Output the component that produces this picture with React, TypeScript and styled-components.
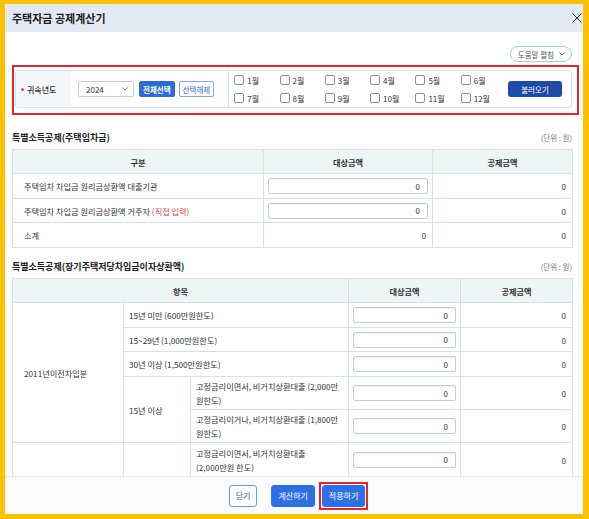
import styled, { createGlobalStyle } from "styled-components";

const GlobalStyle = createGlobalStyle`
  * { box-sizing: border-box; }
  html, body { margin: 0; padding: 0; }
  body {
    width: 589px;
    height: 519px;
    overflow: hidden;
    background: #ffc000;
    font-family: "Noto Sans CJK KR", "Noto Sans", sans-serif;
    color: #333;
  }
`;

const months = [
  ["1월", "2월", "3월", "4월", "5월", "6월"],
  ["7월", "8월", "9월", "10월", "11월", "12월"],
];

export default function App() {
  return (
    <>
      <GlobalStyle />
      <Page>
        <Modal>
          <Header>
            <Title>주택자금 공제계산기</Title>
            <CloseButton aria-label="닫기">
              <svg width="10" height="10" viewBox="0 0 10 10">
                <path d="M0.5 0.5 L9.5 9.5 M9.5 0.5 L0.5 9.5" stroke="#333" strokeWidth="1" />
              </svg>
            </CloseButton>
          </Header>

          <Body>
            <HelpRow>
              <HelpButton>
                도움말 펼침
                <svg width="6" height="4" viewBox="0 0 6 4">
                  <path d="M0.5 0.5 L3 3 L5.5 0.5" stroke="#666" strokeWidth="0.9" fill="none" />
                </svg>
              </HelpButton>
            </HelpRow>

            <RedMark>
              <FilterPanel>
                <LabelCell>귀속년도</LabelCell>
                <Controls>
                  <YearSelect>
                    2024
                    <svg width="6" height="4" viewBox="0 0 6 4">
                      <path d="M0.5 0.5 L3 3 L5.5 0.5" stroke="#777" strokeWidth="0.9" fill="none" />
                    </svg>
                  </YearSelect>
                  <SmallButton $filled>전체선택</SmallButton>
                  <SmallButton>선택해제</SmallButton>
                </Controls>
                <MonthGrid>
                  {months.flat().map((m) => (
                    <MonthItem key={m}>
                      <CheckBox />
                      {m}
                    </MonthItem>
                  ))}
                </MonthGrid>
                <LoadButton>불러오기</LoadButton>
              </FilterPanel>
            </RedMark>

            <SectionHead>
              <SectionTitle>특별소득공제(주택임차금)</SectionTitle>
              <Unit>(단위 : 원)</Unit>
            </SectionHead>
            <Table>
              <colgroup>
                <col style={{ width: 251 }} />
                <col style={{ width: 169 }} />
                <col style={{ width: 140 }} />
              </colgroup>
              <thead>
                <tr>
                  <Th>구분</Th>
                  <Th>대상금액</Th>
                  <Th>공제금액</Th>
                </tr>
              </thead>
              <tbody>
                <Tr $h={25}>
                  <Td $pad={11}>주택임차 차입금 원리금상환액 대출기관</Td>
                  <Td $input>
                    <AmountInput readOnly value="0" />
                  </Td>
                  <Td $right>0</Td>
                </Tr>
                <Tr $h={24}>
                  <Td $pad={11}>
                    주택임차 차입금 원리금상환액 거주자 <Note>(직접 입력)</Note>
                  </Td>
                  <Td $input>
                    <AmountInput readOnly value="0" />
                  </Td>
                  <Td $right>0</Td>
                </Tr>
                <Tr $h={25}>
                  <Td $pad={11}>소계</Td>
                  <Td $right>0</Td>
                  <Td $right>0</Td>
                </Tr>
              </tbody>
            </Table>

            <SectionHead $gap={12}>
              <SectionTitle>특별소득공제(장기주택저당차입금이자상환액)</SectionTitle>
              <Unit>(단위 : 원)</Unit>
            </SectionHead>
            <Table>
              <colgroup>
                <col style={{ width: 111 }} />
                <col style={{ width: 67 }} />
                <col style={{ width: 158 }} />
                <col style={{ width: 112 }} />
                <col style={{ width: 112 }} />
              </colgroup>
              <thead>
                <tr>
                  <Th colSpan={3}>항목</Th>
                  <Th>대상금액</Th>
                  <Th>공제금액</Th>
                </tr>
              </thead>
              <tbody>
                <Tr $h={25}>
                  <Td rowSpan={5} $pad={11}>2011년이전차입분</Td>
                  <Td colSpan={2} $pad={5}>15년 미만 (600만원한도)</Td>
                  <Td $input><AmountInput readOnly value="0" /></Td>
                  <Td $right>0</Td>
                </Tr>
                <Tr $h={24}>
                  <Td colSpan={2} $pad={5}>15~29년 (1,000만원한도)</Td>
                  <Td $input><AmountInput readOnly value="0" /></Td>
                  <Td $right>0</Td>
                </Tr>
                <Tr $h={25}>
                  <Td colSpan={2} $pad={5}>30년 이상 (1,500만원한도)</Td>
                  <Td $input><AmountInput readOnly value="0" /></Td>
                  <Td $right>0</Td>
                </Tr>
                <Tr $h={33}>
                  <Td rowSpan={2} $pad={5}>15년 이상</Td>
                  <Td $pad={5} $wrap>고정금리이면서, 비거치상환대출 (2,000만<br />원한도)</Td>
                  <Td $input><AmountInput readOnly value="0" /></Td>
                  <Td $right>0</Td>
                </Tr>
                <Tr $h={33}>
                  <Td $pad={5} $wrap>고정금리이거나, 비거치상환대출 (1,800만<br />원한도)</Td>
                  <Td $input><AmountInput readOnly value="0" /></Td>
                  <Td $right>0</Td>
                </Tr>
                <Tr $h={34}>
                  <Td $open />
                  <Td $open />
                  <Td $pad={5} $wrap>고정금리이면서, 비거치상환대출<br />(2,000만원 한도)</Td>
                  <Td $input><AmountInput readOnly value="0" /></Td>
                  <Td $right>0</Td>
                </Tr>
              </tbody>
            </Table>
          </Body>

          <Footer>
            <FooterButton>닫기</FooterButton>
            <FooterButton $filled $gap={14}>계산하기</FooterButton>
            <RedFrame>
              <FooterButton $filled>적용하기</FooterButton>
            </RedFrame>
          </Footer>
        </Modal>
      </Page>
    </>
  );
}

const Page = styled.div`
  height: 519px;
  padding: 4px 6px 5px 5px;
`;

const Modal = styled.div`
  height: 100%;
  background: #fff;
  display: flex;
  flex-direction: column;
  overflow: hidden;
`;

const Header = styled.div`
  flex: 0 0 28px;
  background: #e4eaf3;
  display: flex;
  align-items: center;
  justify-content: space-between;
  padding: 0 1px 0 7px;
`;

const Title = styled.div`
  font-size: 11px;
  font-weight: 700;
  color: #222;
`;

const CloseButton = styled.button`
  border: 0;
  background: none;
  padding: 0;
  display: flex;
`;

const Body = styled.div`
  flex: 1;
  overflow: hidden;
  padding: 0 11px 0 7px;
`;

const HelpRow = styled.div`
  display: flex;
  justify-content: flex-end;
  margin-top: 14px;
`;

const HelpButton = styled.button`
  height: 16px;
  padding: 0 6px 0 7px;
  border: 1px solid #9fd3da;
  border-radius: 8px;
  background: #fff;
  color: #555;
  font-family: inherit;
  font-size: 7.5px;
  display: inline-flex;
  align-items: center;
  gap: 5px;
`;

const RedMark = styled.div`
  margin: 3px -7px 0 0;
  padding: 3px 5px 5px 1px;
  border: 2px solid #e3262e;
`;

const FilterPanel = styled.div`
  height: 38px;
  display: flex;
  align-items: stretch;
  border: 1px solid #d9e1ee;
  border-radius: 3px;
  overflow: hidden;
`;

const LabelCell = styled.div`
  width: 55px;
  background: #f4f6fa;
  display: flex;
  align-items: center;
  padding-left: 5px;
  font-size: 8px;
  font-weight: 500;
  color: #333;

  &::before {
    content: "";
    width: 3px;
    height: 3px;
    border-radius: 50%;
    background: #e0506a;
    margin-right: 3px;
  }
`;

const Controls = styled.div`
  display: flex;
  align-items: center;
  gap: 4px;
  padding: 0 14px 0 7px;
  border-right: 1px solid #d9e1ee;
`;

const YearSelect = styled.div`
  width: 56px;
  height: 16px;
  margin-right: 1px;
  border: 1px solid #c9ced6;
  border-radius: 2px;
  display: flex;
  align-items: center;
  justify-content: space-between;
  padding: 0 5px 0 7px;
  font-size: 8px;
  color: #333;
`;

const SmallButton = styled.button<{ $filled?: boolean }>`
  height: 16px;
  padding: 0 3px;
  border-radius: 2px;
  border: 1px solid ${(p) => (p.$filled ? "#2d6bd6" : "#86a7e0")};
  background: ${(p) => (p.$filled ? "#2d6bd6" : "#fff")};
  color: ${(p) => (p.$filled ? "#fff" : "#3a6fd0")};
  font-family: inherit;
  font-size: 7.5px;
  font-weight: ${(p) => (p.$filled ? 700 : 400)};
  white-space: nowrap;
`;

const MonthGrid = styled.div`
  flex: 1;
  display: grid;
  grid-template-columns: repeat(6, 45.3px);
  grid-auto-rows: 18px;
  align-content: center;
  padding-left: 5px;
`;

const MonthItem = styled.label`
  display: flex;
  align-items: center;
  gap: 3px;
  font-size: 8px;
  color: #333;
`;

const CheckBox = styled.span`
  width: 10px;
  height: 10px;
  border: 1px solid #8a8f99;
  border-radius: 2px;
  background: #fff;
`;

const LoadButton = styled.button`
  align-self: center;
  width: 54px;
  height: 16px;
  margin-right: 9px;
  border: 0;
  border-radius: 3px;
  background: #1f4aa6;
  color: #fff;
  font-family: inherit;
  font-size: 7.5px;
`;

const SectionHead = styled.div<{ $gap?: number }>`
  display: flex;
  justify-content: space-between;
  align-items: center;
  margin-top: ${(p) => p.$gap ?? 16}px;
  margin-bottom: 6px;
  height: 12px;
`;

const SectionTitle = styled.div`
  font-size: 9px;
  font-weight: 700;
  color: #222;
`;

const Unit = styled.div`
  font-size: 7.5px;
  color: #777;
`;

const Table = styled.table`
  width: 560px;
  border-collapse: collapse;
  table-layout: fixed;
  font-size: 8.2px;
  color: #333;
`;

const Th = styled.th`
  height: 24px;
  background: #edf5f5;
  border: 1px solid #d3e2e5;
  font-weight: 700;
  text-align: center;
  padding: 0;
`;

const Tr = styled.tr<{ $h: number }>`
  height: ${(p) => p.$h}px;
`;

const Td = styled.td<{
  $pad?: number;
  $right?: boolean;
  $input?: boolean;
  $wrap?: boolean;
  $open?: boolean;
}>`
  border: 1px solid #d3e2e5;
  ${(p) => (p.$open ? "border-bottom: none;" : "")}
  padding: ${(p) =>
    p.$input ? "0 4px" : p.$right ? "0 6px 0 0" : `2px 4px 2px ${p.$pad ?? 5}px`};
  text-align: ${(p) => (p.$right ? "right" : "left")};
  line-height: ${(p) => (p.$wrap ? "14px" : "12px")};
  vertical-align: middle;
`;

const AmountInput = styled.input`
  display: block;
  width: 100%;
  height: 16px;
  border: 1px solid #c8cdd3;
  border-radius: 2px;
  padding: 0 7px;
  text-align: right;
  font-family: inherit;
  font-size: 8px;
  color: #333;
  box-shadow: inset 0 1px 1px rgba(0, 0, 0, 0.06);
  outline: none;
`;

const Note = styled.span`
  color: #e0474c;
`;

const Footer = styled.div`
  flex: 0 0 38px;
  display: flex;
  align-items: center;
  justify-content: center;
  padding-left: 9px;
  border-top: 1px solid #e8e8e8;
  background: #fbfbfc;
`;

const FooterButton = styled.button<{ $filled?: boolean; $gap?: number }>`
  height: 22px;
  padding: 0 6px;
  margin-left: ${(p) => p.$gap ?? 0}px;
  border-radius: 3px;
  border: 1px solid ${(p) => (p.$filled ? "#2f6fe6" : "#7098df")};
  background: ${(p) => (p.$filled ? "#2f6fe6" : "#fff")};
  color: ${(p) => (p.$filled ? "#fff" : "#2f63c8")};
  font-family: inherit;
  font-size: 8px;
`;

const RedFrame = styled.div`
  margin-left: 4px;
  padding: 1px;
  border: 2px solid #e3262e;
  display: flex;
`;
